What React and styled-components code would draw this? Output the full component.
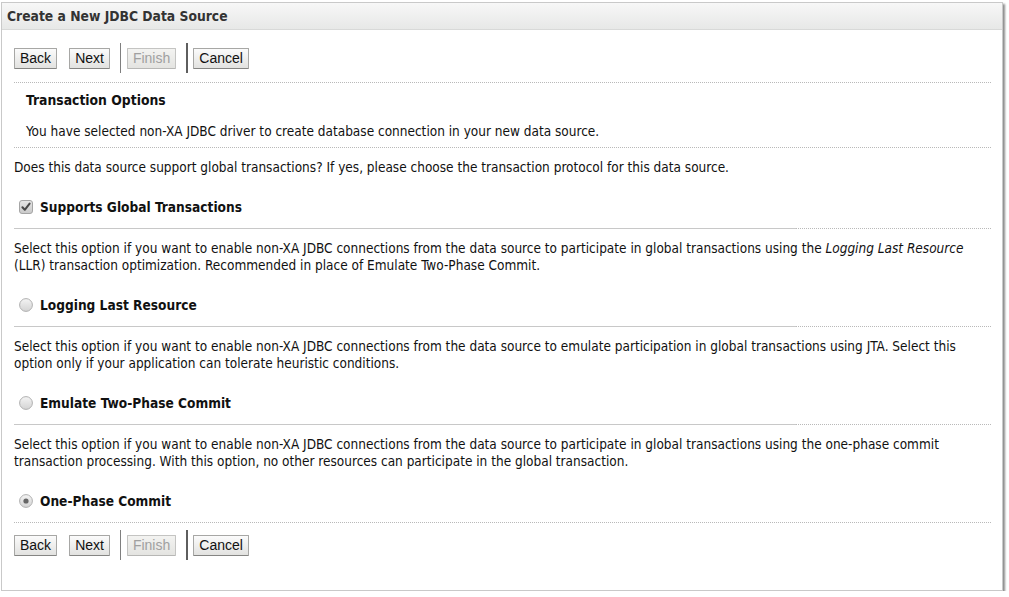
import styled, { createGlobalStyle } from "styled-components";

const GlobalStyle = createGlobalStyle`
    body {
        margin: 0;
        background: #ffffff;
        font-family: "DejaVu Sans Condensed", "DejaVu Sans", sans-serif;
        color: #111;
    }
`

function CheckBox() {
    return (
        <svg width="14" height="14" viewBox="0 0 14 14">
            <defs>
                <linearGradient id="cbg" x1="0" y1="0" x2="0" y2="1">
                    <stop offset="0" stopColor="#e6e6e6" />
                    <stop offset="1" stopColor="#c9c9c9" />
                </linearGradient>
            </defs>
            <rect x="0.5" y="0.5" width="13" height="13" rx="2.5" fill="url(#cbg)" stroke="#a5a5a5" />
            <path d="M3.4 7.2 L5.8 9.8 L10.6 3.6" fill="none" stroke="#474747" strokeWidth="2" strokeLinecap="round" strokeLinejoin="round" />
        </svg>
    )
}

function Radio({ checked }) {
    return (
        <svg width="14" height="14" viewBox="0 0 14 14">
            <defs>
                <linearGradient id="rbg" x1="0" y1="0" x2="0" y2="1">
                    <stop offset="0" stopColor="#f4f4f4" />
                    <stop offset="1" stopColor="#d3d3d3" />
                </linearGradient>
            </defs>
            <circle cx="7" cy="7" r="6.4" fill="url(#rbg)" stroke="#b0b0b0" />
            {checked && <circle cx="7" cy="7" r="2.6" fill="#666" />}
        </svg>
    )
}

function Buttons({ top }) {
    return (
        <Bar $top={top}>
            <Button>Back</Button>
            <Button>Next</Button>
            <Divider />
            <Button disabled>Finish</Button>
            <Divider $bold />
            <Button>Cancel</Button>
        </Bar>
    )
}

function Option({ label, control }) {
    return (
        <OptionRow>
            {control}
            <span>{label}</span>
        </OptionRow>
    )
}

function Separator() {
    return (
        <SepWrap>
            <SolidPart />
            <DottedPart />
        </SepWrap>
    )
}

export default function App() {
    return (
        <>
            <GlobalStyle />
            <Panel>
                <Header>Create a New JDBC Data Source</Header>
                <Body>
                    <Buttons top />
                    <Rule />
                    <Intro>
                        <h3>Transaction Options</h3>
                        <p>You have selected non-XA JDBC driver to create database connection in your new data source.</p>
                    </Intro>
                    <Rule />
                    <Question>Does this data source support global transactions? If yes, please choose the transaction protocol for this data source.</Question>

                    <Option label="Supports Global Transactions" control={<CheckBox />} />
                    <Separator />
                    <Para>
                        Select this option if you want to enable non-XA JDBC connections from the data source to participate in global transactions using the <i>Logging Last Resource</i> (LLR) transaction optimization. Recommended in place of Emulate Two-Phase Commit.
                    </Para>

                    <Option label="Logging Last Resource" control={<Radio />} />
                    <Separator />
                    <Para>
                        Select this option if you want to enable non-XA JDBC connections from the data source to emulate participation in global transactions using JTA. Select this option only if your application can tolerate heuristic conditions.
                    </Para>

                    <Option label="Emulate Two-Phase Commit" control={<Radio />} />
                    <Separator />
                    <Para>
                        Select this option if you want to enable non-XA JDBC connections from the data source to participate in global transactions using the one-phase commit transaction processing. With this option, no other resources can participate in the global transaction.
                    </Para>

                    <Option label="One-Phase Commit" control={<Radio checked />} />
                    <Rule />
                    <Buttons />
                </Body>
            </Panel>
        </>
    )
}

const Panel = styled.div`
    margin: 2px 0 0 1px;
    width: 1002px;
    height: 589px;
    box-sizing: border-box;
    border: 1px solid #c9c9c9;
    background: #fff;
    box-shadow: 2px 2px 2px rgba(0, 0, 0, 0.45);
`
const Header = styled.div`
    height: 27px;
    box-sizing: border-box;
    padding: 5px 0 0 5px;
    font-size: 13.75px;
    font-weight: bold;
    color: #333;
    background: linear-gradient(#f7f7f7, #e7e8e7);
    border-bottom: 1px solid #d8d9d8;
`
const Body = styled.div`
    padding: 0 12px;
    font-size: 13.5px;
    line-height: 17px;
`
const Bar = styled.div`
    display: flex;
    align-items: center;
    height: 30px;
    margin-top: ${p => p.$top ? "13px" : "7px"};
    margin-bottom: 9px;
`
const Button = styled.div`
    height: 21px;
    box-sizing: border-box;
    padding: 0 5px;
    margin-right: 12px;
    display: flex;
    align-items: center;
    font-family: "Liberation Sans", Arial, sans-serif;
    font-size: 14px;
    color: ${p => p.disabled ? "#a0a0a0" : "#111"};
    background: ${p => p.disabled ? "linear-gradient(#f3f3f1, #e4e4e1)" : "linear-gradient(#fbfbfb, #e2e2e0)"};
    border: 1px solid ${p => p.disabled ? "#c4c4c2" : "#a7a7a5"};
    border-bottom-color: ${p => p.disabled ? "#b7b7b5" : "#858583"};
    border-radius: 1px;
`
const Divider = styled.div`
    width: ${p => p.$bold ? "2px" : "1px"};
    height: 30px;
    background: ${p => p.$bold ? "#5e5e5e" : "#7f7f7f"};
    margin-right: ${p => p.$bold ? "5px" : "6px"};
    margin-left: -2px;
`
const Rule = styled.div`
    width: 977px;
    border-top: 1px dotted #b9b9b9;
`
const Intro = styled.div`
    padding: 9px 12px 7px;

    && h3 {
        margin: 0;
        font-size: 13.8px;
        line-height: 17px;
        font-weight: bold;
    }
    && p {
        margin: 14px 0 0;
    }
`
const Question = styled.p`
    margin: 11px 0 22px;
`
const OptionRow = styled.div`
    display: flex;
    align-items: center;
    gap: 7px;
    height: 18px;
    padding-left: 5px;
    margin-bottom: 12px;
    font-size: 13.6px;
    font-weight: bold;
`
const SepWrap = styled.div`
    display: flex;
    width: 977px;
`
const SolidPart = styled.div`
    width: 782px;
    border-top: 1px solid #c8c8c8;
`
const DottedPart = styled.div`
    flex: 1;
    border-top: 1px dotted #b9b9b9;
`
const Para = styled.p`
    margin: 11px 0 22px;

    && i {
        font-style: italic;
    }
`
